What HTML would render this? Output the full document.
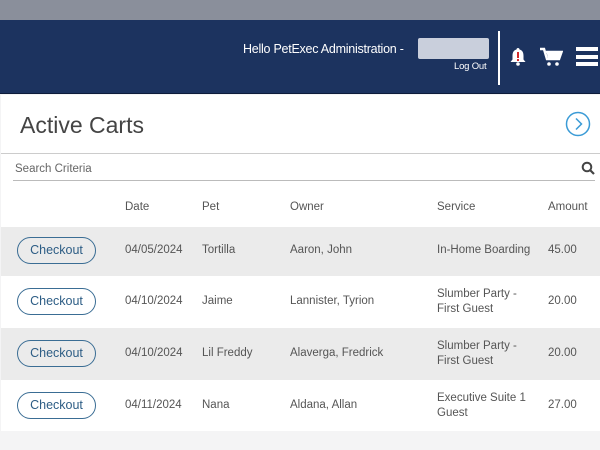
<!DOCTYPE html>
<html><head><style>
*{margin:0;padding:0;box-sizing:border-box}
body{width:600px;height:450px;overflow:hidden;background:#f4f4f5;font-family:"Liberation Sans",sans-serif;position:relative;color:#555}
.top{position:absolute;left:0;top:0;width:600px;height:20px;background:#8a8f9b}
.hdr{position:absolute;left:0;top:20px;width:600px;height:74px;background:#1c335f;border-bottom:1px solid #0d1c3a}
.hello{position:absolute;left:243px;top:22px;color:#fff;font-size:12.5px;letter-spacing:-0.25px;white-space:nowrap}
.blur{position:absolute;left:418px;top:18px;width:71px;height:21px;background:#c9cfdc;border-radius:2px}
.logout{position:absolute;left:454px;top:41px;color:#fff;font-size:9.5px;letter-spacing:-0.2px}
.vl{position:absolute;left:498px;top:11px;width:2px;height:54px;background:#fff}
.main{position:absolute;left:1px;top:95px;width:599px;height:336px;background:#fff}
.t{position:absolute;font-size:11.5px;color:#555}
h1{position:absolute;left:20px;top:112px;font-weight:normal;font-size:23px;color:#444}
.row{position:absolute;left:1px;width:599px}
.btn{position:absolute;left:17px;width:79px;height:27px;border:1.5px solid #3a6d94;border-radius:14px;color:#2d5d85;font-size:12.5px;text-align:center;line-height:24px}
</style></head><body>
<div class="top"></div>
<div class="hdr">
<div class="hello">Hello PetExec Administration -</div>
<div class="blur"></div>
<div class="logout">Log Out</div>
<div class="vl"></div>
<svg style="position:absolute;left:508px;top:27px" width="20" height="20" viewBox="0 0 20 20"><path d="M10 1c-1 0-1.5.7-1.5 1.5C5.5 3.3 4.5 5.5 4.5 9v3.5L2.5 15h15l-2-2.5V9c0-3.5-1-5.7-4-6.5C11.5 1.7 11 1 10 1z" fill="#fff"/><circle cx="10" cy="17" r="1.8" fill="#fff"/><rect x="9" y="5" width="2" height="6" fill="#d42a2a"/><rect x="9" y="12" width="2" height="2" fill="#d42a2a"/></svg>
<svg style="position:absolute;left:539px;top:27px" width="24" height="20" viewBox="0 0 24 20"><path d="M1 2h4l3 10h12l2.5-7H7" fill="none" stroke="#fff" stroke-width="2.5"/><path d="M7.5 5h14.5l-2 6H9z" fill="#fff"/><circle cx="10" cy="17" r="1.8" fill="#fff"/><circle cx="18" cy="17" r="1.8" fill="#fff"/></svg>
<div style="position:absolute;left:576px;top:27px;width:22px;height:4px;background:#fff"></div>
<div style="position:absolute;left:576px;top:34.5px;width:22px;height:4px;background:#fff"></div>
<div style="position:absolute;left:576px;top:42px;width:22px;height:4px;background:#fff"></div>
</div>
<div class="main"></div>
<h1>Active Carts</h1>
<svg style="position:absolute;left:565px;top:111px" width="26" height="26"><circle cx="13" cy="13" r="11.5" fill="none" stroke="#3b9bd6" stroke-width="1.5"/><path d="M11 7.5l5.5 5.5-5.5 5.5" fill="none" stroke="#3b9bd6" stroke-width="1.5"/></svg>
<div style="position:absolute;left:1px;top:153px;width:599px;height:1px;background:#ccc"></div>
<div class="t" style="left:15px;top:163px;color:#666">Search Criteria</div>
<svg style="position:absolute;left:581px;top:161px" width="14" height="14"><circle cx="6" cy="6" r="4.3" fill="none" stroke="#444" stroke-width="2"/><path d="M9 9l4 4" stroke="#444" stroke-width="2.2"/></svg>
<div style="position:absolute;left:13px;top:180px;width:582px;height:1px;background:#bbb"></div>
<div class="t" style="left:125px;top:201px">Date</div>
<div class="t" style="left:202px;top:201px">Pet</div>
<div class="t" style="left:290px;top:201px">Owner</div>
<div class="t" style="left:437px;top:201px">Service</div>
<div class="t" style="left:548px;top:201px">Amount</div>

<div class="row" style="top:227px;height:49px;background:#ebebeb"></div>
<div class="row" style="top:328px;height:52px;background:#ebebeb"></div>

<div class="btn" style="top:237px">Checkout</div>
<div class="t" style="left:125px;top:244px">04/05/2024</div>
<div class="t" style="left:202px;top:244px">Tortilla</div>
<div class="t" style="left:290px;top:244px">Aaron, John</div>
<div class="t" style="left:437px;top:244px">In-Home Boarding</div>
<div class="t" style="left:548px;top:244px">45.00</div>

<div class="btn" style="top:288px">Checkout</div>
<div class="t" style="left:125px;top:295px">04/10/2024</div>
<div class="t" style="left:202px;top:295px">Jaime</div>
<div class="t" style="left:290px;top:295px">Lannister, Tyrion</div>
<div class="t" style="left:437px;top:287px;line-height:15px">Slumber Party -<br>First Guest</div>
<div class="t" style="left:548px;top:295px">20.00</div>

<div class="btn" style="top:340px">Checkout</div>
<div class="t" style="left:125px;top:347px">04/10/2024</div>
<div class="t" style="left:202px;top:347px">Lil Freddy</div>
<div class="t" style="left:290px;top:347px">Alaverga, Fredrick</div>
<div class="t" style="left:437px;top:339px;line-height:15px">Slumber Party -<br>First Guest</div>
<div class="t" style="left:548px;top:347px">20.00</div>

<div class="btn" style="top:392px">Checkout</div>
<div class="t" style="left:125px;top:399px">04/11/2024</div>
<div class="t" style="left:202px;top:399px">Nana</div>
<div class="t" style="left:290px;top:399px">Aldana, Allan</div>
<div class="t" style="left:437px;top:391px;line-height:15px">Executive Suite 1<br>Guest</div>
<div class="t" style="left:548px;top:399px">27.00</div>
</body></html>
